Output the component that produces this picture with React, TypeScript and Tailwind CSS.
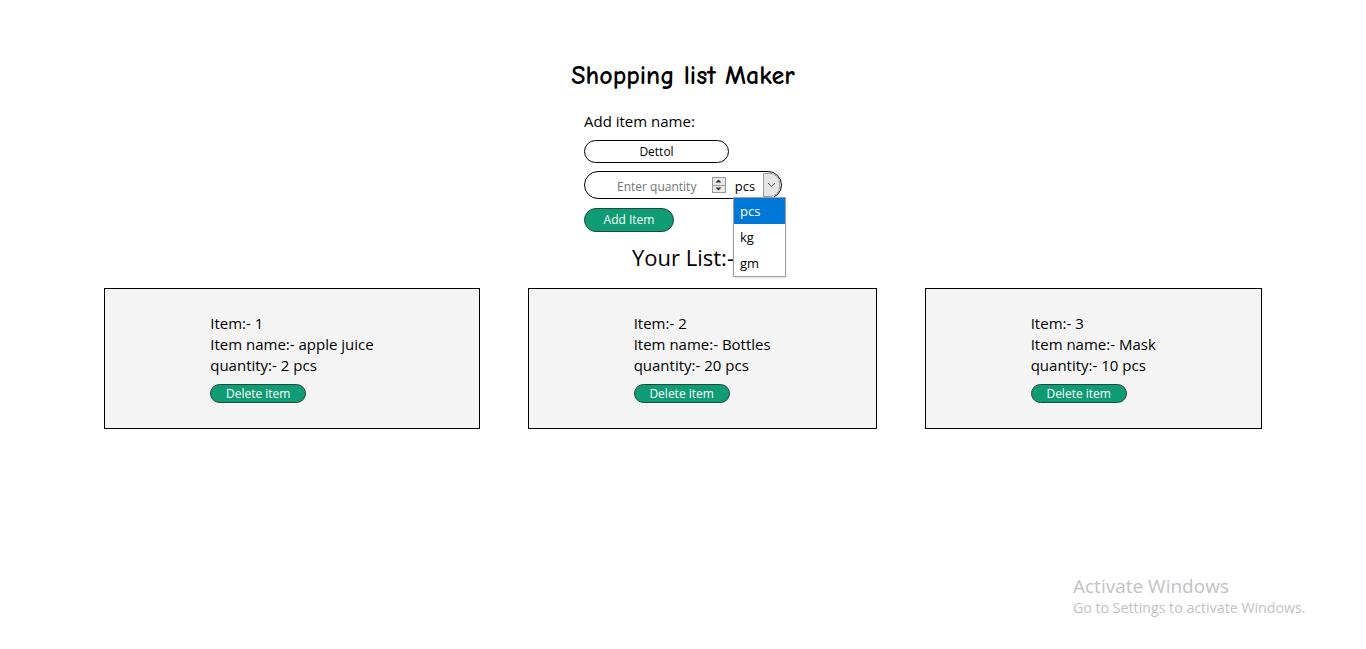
const items = [
  { id: 1, name: "apple juice", qty: 2, unit: "pcs" },
  { id: 2, name: "Bottles", qty: 20, unit: "pcs" },
  { id: 3, name: "Mask", qty: 10, unit: "pcs" },
]

const ui = { fontFamily: '"Open Sans", "Noto Sans", sans-serif' }

export default function App() {
  return (
    <div className="relative min-h-[649px] bg-white text-black" style={ui}>
      <h1
        className="pt-[60px] text-center text-[26px] font-semibold leading-[32px]"
        style={{ fontFamily: '"Comic Sans MS", "Comic Neue", cursive' }}
      >
        Shopping list Maker
      </h1>

      <div className="mx-auto mt-[18px] w-[198px]">
        <p className="text-[15px] leading-[22px]">Add item name:</p>

        <div className="mt-[8px] flex h-[23px] w-[145px] items-center justify-center rounded-full border border-black text-[12px]">
          Dettol
        </div>

        <div className="relative mt-[8px] flex h-[28px] w-[198px] items-center rounded-full border border-black pl-[32px] pr-[1px]">
          <span className="mt-[3px] w-[96px] text-[12px] text-[#757575]">Enter quantity</span>
          <Spinner />
          <span className="ml-[9px] mt-[3px] text-[13px]">pcs</span>
          <span className="ml-[8px] flex h-[24px] w-[17px] items-center justify-center rounded-r-[10px] border border-[#9a9a9a] bg-[#e5e5e5]">
            <svg width="9" height="6" viewBox="0 0 9 6">
              <path d="M1 1 L4.5 4.5 L8 1" fill="none" stroke="#444" strokeWidth="1" />
            </svg>
          </span>

          <ul className="absolute left-[148px] top-[25px] z-10 w-[53px] border border-[#a0a0a0] bg-white text-[13px] shadow-sm">
            <li className="h-[26px] bg-[#0078d7] pl-[6px] leading-[26px] text-white">pcs</li>
            <li className="h-[26px] pl-[6px] leading-[26px]">kg</li>
            <li className="h-[26px] pl-[6px] leading-[26px]">gm</li>
          </ul>
        </div>

        <button
          type="button"
          className="mt-[9px] h-[24px] w-[90px] rounded-full border border-[#1e4a3a] bg-[#0f9b73] text-[12px] text-white"
        >
          Add Item
        </button>
      </div>

      <h2 className="mt-[10px] text-center text-[22px] leading-[30px]">Your List:-</h2>

      <div className="mt-[16px] flex justify-center gap-[48px]">
        {items.map((item) => (
          <div key={item.id} className="border border-black bg-[#f4f4f4] px-[105px] pt-[24px] pb-[24px]">
            <div className="text-[15px] leading-[21px]">
              <p>Item:- {item.id}</p>
              <p>Item name:- {item.name}</p>
              <p>
                quantity:- {item.qty} {item.unit}
              </p>
            </div>
            <button
              type="button"
              className="mt-[8px] h-[19px] w-[96px] rounded-full border border-[#1e4a3a] bg-[#0f9b73] text-[12px] leading-[17px] text-white"
            >
              Delete item
            </button>
          </div>
        ))}
      </div>

      {/* windows watermark */}
      <div className="absolute left-[1073px] top-[574px] text-[#c2c2c2]">
        <p className="text-[19px] leading-[24px]">Activate Windows</p>
        <p className="text-[14.2px] leading-[20px]">Go to Settings to activate Windows.</p>
      </div>
    </div>
  )
}

function Spinner() {
  return (
    <span className="flex h-[16px] w-[14px] flex-col border border-[#9a9a9a] bg-[#e8e8e8]">
      <span className="flex flex-1 items-center justify-center border-b border-[#9a9a9a]">
        <svg width="7" height="4" viewBox="0 0 7 4">
          <path d="M0.5 3.5 L3.5 0.5 L6.5 3.5 Z" fill="#333" />
        </svg>
      </span>
      <span className="flex flex-1 items-center justify-center">
        <svg width="7" height="4" viewBox="0 0 7 4">
          <path d="M0.5 0.5 L3.5 3.5 L6.5 0.5 Z" fill="#333" />
        </svg>
      </span>
    </span>
  )
}
